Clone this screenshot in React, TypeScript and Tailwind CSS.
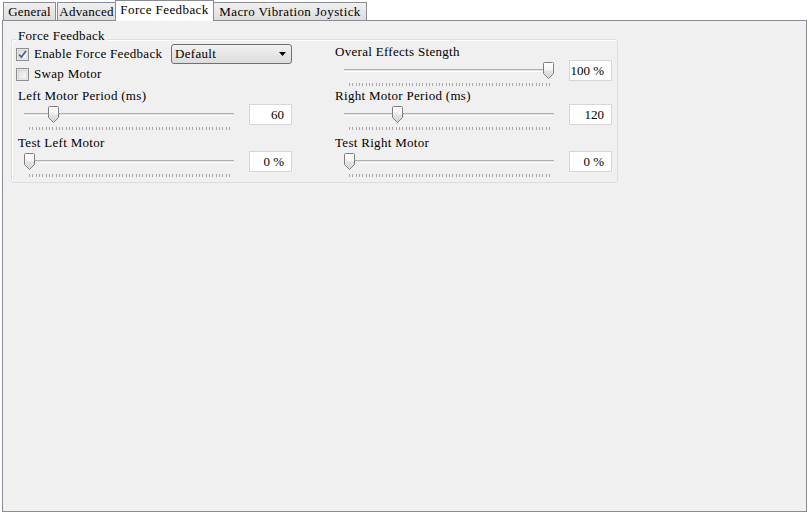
import React from 'react';

const TRACK_RANGE = 199;

function Thumb({ left }: { left: number }) {
  return (
    <svg
      width="11"
      height="17"
      viewBox="0 0 11 17"
      className="absolute top-[2px]"
      style={{ left }}
    >
      <defs>
        <linearGradient id="thumbFill" x1="0" y1="0" x2="0" y2="1">
          <stop offset="0" stopColor="#ffffff" />
          <stop offset="0.45" stopColor="#f4f4f4" />
          <stop offset="0.55" stopColor="#e2e2e2" />
          <stop offset="1" stopColor="#d6d6d6" />
        </linearGradient>
      </defs>
      <path
        d="M1.5 0.5H9.5Q10.5 0.5 10.5 1.5V11.5L5.5 16.5L0.5 11.5V1.5Q0.5 0.5 1.5 0.5Z"
        fill="url(#thumbFill)"
        stroke="#7e7e7e"
      />
    </svg>
  );
}

function Ticks() {
  const marks = Array.from({ length: 61 }, (_, i) => Math.round((i * 200) / 60));
  return (
    <svg width="201" height="3" className="absolute left-[5px] top-[23px]">
      {marks.map((x) => (
        <rect key={x} x={x} y={0} width={1} height={3} fill="#a9a9a9" />
      ))}
    </svg>
  );
}

function Slider({ value, max, text, offset }: { value: number; max: number; text: string; offset: number }) {
  const pos = Math.round((value / max) * TRACK_RANGE);
  return (
    <div className="flex h-[26px] items-start" style={{ marginLeft: offset }}>
      <div className="relative h-[26px] w-[210px]">
        <div className="absolute left-0 right-0 top-[9px] h-[3px] border-t border-b border-t-[#b0b0b0] border-b-white bg-[#e3e3e3]" />
        <Thumb left={pos} />
        <Ticks />
      </div>
      <div className="ml-[15px] flex h-[21px] w-[43px] items-center justify-end border border-[#d6d6d6] bg-white pr-[7px] tracking-[0px]">
        {text}
      </div>
    </div>
  );
}

function Checkbox({ checked }: { checked?: boolean }) {
  return (
    <svg width="13" height="13" viewBox="0 0 13 13" className="shrink-0">
      <defs>
        <linearGradient id={checked ? 'cbOn' : 'cbOff'} x1="0" y1="0" x2="1" y2="1">
          <stop offset="0" stopColor="#dcdcdc" />
          <stop offset="1" stopColor="#fbfbfb" />
        </linearGradient>
      </defs>
      <rect x="0.5" y="0.5" width="12" height="12" fill="#f4f4f4" stroke="#8e8f8f" />
      <rect x="2" y="2" width="9" height="9" fill={`url(#${checked ? 'cbOn' : 'cbOff'})`} stroke="#c4c4c4" strokeWidth="0.6" />
      {checked && (
        <path d="M3.2 6.4L5.3 9.3L9.9 2.9" fill="none" stroke="#4a5f97" strokeWidth="1.7" strokeLinejoin="round" />
      )}
    </svg>
  );
}

function Tab({ label, width, active, first }: { label: string; width: number; active?: boolean; first?: boolean }) {
  if (active) {
    return (
      <div
        className="relative z-10 -ml-[1px] -mb-[1px] flex h-[21px] items-start justify-center border border-b-0 border-[#898c95] bg-white pt-[2px] tracking-[0.4px]"
        style={{ width }}
      >
        {label}
      </div>
    );
  }
  return (
    <div
      className={`flex h-[18px] items-start justify-center border border-b-0 border-[#898c95] bg-gradient-to-b from-[#f0f0f0] to-[#dedede] pt-[2px] tracking-[0.2px] ${first ? '' : 'ml-[1px]'}`}
      style={{ width }}
    >
      {label}
    </div>
  );
}

export default function App() {
  return (
    <div className="h-[514px] w-[810px] whitespace-nowrap bg-white pl-[2px] font-['Liberation_Serif',serif] text-[13px] leading-[14px] tracking-[0.3px] text-black">
      <div className="flex h-[20px] items-end pl-[1px]">
        <Tab label="General" width={53} first />
        <Tab label="Advanced" width={59} />
        <Tab label="Force Feedback" width={99} active />
        <div className="-ml-[1px] flex h-[18px] w-[154px] items-start justify-center border border-b-0 border-[#898c95] bg-gradient-to-b from-[#f0f0f0] to-[#dedede] pt-[2px] tracking-[0.4px]">
          Macro Vibration Joystick
        </div>
      </div>
      <div className="h-[492px] w-[805px] border border-[#898c95] bg-[#f0f0f0] pl-[8px] pt-[18px]">
        <div className="relative h-[144px] w-[607px] rounded-[3px] border border-[#d5dfe5] pl-[6px] pt-[4px] shadow-[inset_1px_1px_0_#ffffff]">
          <span className="absolute -top-[11px] left-[4px] bg-[#f0f0f0] px-[2px]">Force Feedback</span>
          <div className="grid grid-cols-[274px_277px] gap-x-[43px]">
            <div className="flex flex-col">
              <div className="-ml-[2px] flex h-[20px] items-center">
                <Checkbox checked />
                <span className="ml-[5px] w-[126px]">Enable Force Feedback</span>
                <div className="ml-[11px] flex h-[20px] w-[121px] items-center justify-between rounded-[3px] border border-[#707070] bg-gradient-to-b from-[#f2f2f2] to-[#dcdcdc] pl-[3px] pr-[5px]">
                  <span>Default</span>
                  <svg width="7" height="4" viewBox="0 0 7 4">
                    <path d="M0 0H7L3.5 4Z" fill="#000" />
                  </svg>
                </div>
              </div>
              <div className="-ml-[2px] mt-[2px] flex h-[16px] items-center">
                <Checkbox />
                <span className="ml-[5px]">Swap Motor</span>
              </div>
              <div className="mt-[7px]">Left Motor Period (ms)</div>
              <div className="mt-[1px]">
                <Slider value={60} max={500} text="60" offset={6} />
              </div>
              <div className="mt-[6px]">Test Left Motor</div>
              <div className="mt-[1px]">
                <Slider value={0} max={100} text="0 %" offset={6} />
              </div>
            </div>
            <div className="flex flex-col">
              <div className="mt-[1px]">Overal Effects Stength</div>
              <div className="mt-[1px]">
                <Slider value={100} max={100} text="100 %" offset={9} />
              </div>
              <div className="mt-[3px]">Right Motor Period (ms)</div>
              <div className="mt-[1px]">
                <Slider value={120} max={500} text="120" offset={9} />
              </div>
              <div className="mt-[6px]">Test Right Motor</div>
              <div className="mt-[1px]">
                <Slider value={0} max={100} text="0 %" offset={9} />
              </div>
            </div>
          </div>
        </div>
      </div>
    </div>
  );
}
